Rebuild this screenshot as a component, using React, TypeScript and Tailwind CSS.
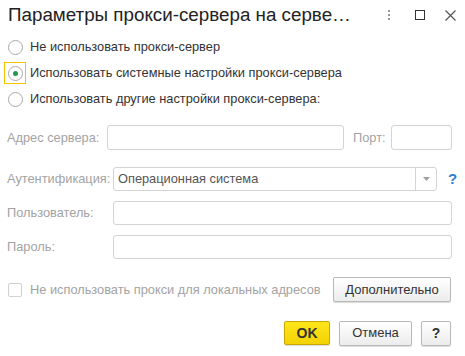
import React from "react";

function Radio({ checked, focus, label }: { checked?: boolean; focus?: boolean; label: string }) {
  return (
    <div className="flex h-[26px] items-center">
      <div
        className={
          "ml-[4px] flex h-[22px] w-[22px] items-center justify-center border " +
          (focus ? "border-[#f5c400]" : "border-transparent")
        }
      >
        <div className="flex h-[15px] w-[15px] items-center justify-center rounded-full border border-[#a9a9a9] bg-white">
          {checked && <div className="h-[5px] w-[5px] rounded-full bg-[#1f9a4a]" />}
        </div>
      </div>
      <span className="ml-[4px] text-[12.8px] text-[#333]">{label}</span>
    </div>
  );
}

function Btn({ children, className = "" }: { children: React.ReactNode; className?: string }) {
  return (
    <div
      className={
        "flex h-[25px] items-center justify-center rounded-[2px] border border-[#b9b9b9] bg-gradient-to-b from-white to-[#ececec] text-[13px] text-[#333] shadow-[0_1px_1px_rgba(0,0,0,0.15)] " +
        className
      }
    >
      {children}
    </div>
  );
}

export default function App() {
  return (
    <div
      className="relative h-[356px] w-[465px] overflow-hidden bg-white"
      style={{ fontFamily: '"Liberation Sans", Arial, sans-serif' }}
    >
      {/* Title bar */}
      <div className="flex h-[30px] items-center">
        <div className="ml-[8px] text-[18.8px] text-[#222]">Параметры прокси-сервера на серве…</div>
        <div className="ml-auto flex items-center">
          <div className="flex flex-col gap-[2px]">
            <div className="h-[2px] w-[2px] bg-[#999]" />
            <div className="h-[2px] w-[2px] bg-[#999]" />
            <div className="h-[2px] w-[2px] bg-[#999]" />
          </div>
          <div className="ml-[25px] h-[10px] w-[10px] border-[1.5px] border-[#333]" />
          <svg className="ml-[20px] mr-[9px]" width="11" height="11" viewBox="0 0 11 11">
            <path d="M0.5 0.5 L10.5 10.5 M10.5 0.5 L0.5 10.5" stroke="#555" strokeWidth="1.2" />
          </svg>
        </div>
      </div>

      {/* Radios */}
      <div className="mt-[4px] flex flex-col">
        <Radio label="Не использовать прокси-сервер" />
        <Radio checked focus label="Использовать системные настройки прокси-сервера" />
        <Radio label="Использовать другие настройки прокси-сервера:" />
      </div>

      {/* Address */}
      <div className="mt-[13px] flex h-[25px] items-center text-[12.8px] text-[#a3a3a3]">
        <span className="ml-[7px] w-[100px]">Адрес сервера:</span>
        <div className="h-[25px] w-[237px] rounded-[3px] border border-[#d3d3d3] bg-white" />
        <span className="ml-[9px] w-[38px]">Порт:</span>
        <div className="h-[25px] w-[61px] rounded-[3px] border border-[#d3d3d3] bg-white" />
      </div>

      {/* Auth */}
      <div className="mt-[17px] flex h-[24px] items-center text-[12.8px]">
        <span className="ml-[7px] w-[106px] text-[#a3a3a3]">Аутентификация:</span>
        <div className="flex h-[24px] w-[324px] items-center rounded-[3px] border border-[#d3d3d3] bg-white">
          <span className="ml-[4px] flex-1 text-[#555]">Операционная система</span>
          <div className="flex h-full w-[21px] items-center justify-center border-l border-[#d3d3d3]">
            <svg width="7" height="4" viewBox="0 0 7 4">
              <path d="M0 0 L7 0 L3.5 4 Z" fill="#a0a0a0" />
            </svg>
          </div>
        </div>
        <span className="ml-[11px] text-[15px] font-bold text-[#2a7fd0]">?</span>
      </div>

      {/* User */}
      <div className="mt-[10px] flex h-[24px] items-center text-[12.8px]">
        <span className="ml-[7px] w-[106px] text-[#a3a3a3]">Пользователь:</span>
        <div className="h-[24px] w-[339px] rounded-[3px] border border-[#d3d3d3] bg-white" />
      </div>

      {/* Password */}
      <div className="mt-[10px] flex h-[24px] items-center text-[12.8px]">
        <span className="ml-[7px] w-[106px] text-[#a3a3a3]">Пароль:</span>
        <div className="h-[24px] w-[339px] rounded-[3px] border border-[#d3d3d3] bg-white" />
      </div>

      {/* Checkbox row */}
      <div className="mt-[18px] flex h-[25px] items-center text-[12.8px]">
        <div className="ml-[8px] h-[14px] w-[14px] rounded-[2px] border border-[#d0d0d0] bg-white" />
        <span className="ml-[8px] text-[#a3a3a3]">Не использовать прокси для локальных адресов</span>
        <Btn className="ml-auto mr-[14px] w-[118px]">Дополнительно</Btn>
      </div>

      {/* Bottom buttons */}
      <div className="mt-[19px] flex h-[24px] items-center justify-end pr-[14px]">
        <div className="flex h-[24px] w-[46px] items-center justify-center rounded-[2px] border border-[#c9a800] bg-gradient-to-b from-[#ffe51a] to-[#f3d200] text-[14px] font-bold text-[#333] shadow-[0_1px_1px_rgba(0,0,0,0.15)]">
          OK
        </div>
        <Btn className="ml-[9px] h-[24px] w-[73px]">Отмена</Btn>
        <Btn className="ml-[9px] h-[24px] w-[30px] font-bold text-[14px]">?</Btn>
      </div>
    </div>
  );
}
